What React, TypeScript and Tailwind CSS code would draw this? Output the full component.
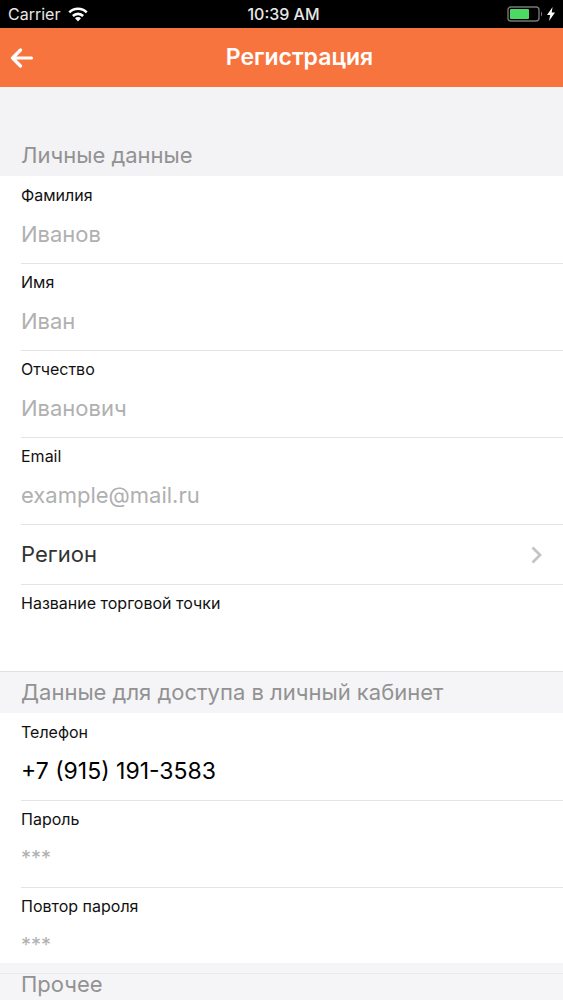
import { useId, type ReactNode } from 'react';

interface FieldProps {
  label: string;
  type?: string;
  placeholder?: string;
  defaultValue?: string;
  /** First row of a section, so no divider above it. */
  first?: boolean;
  size?: 'sm' | 'md' | 'lg';
}

const INPUT_SIZES = {
  sm: 'text-xl',
  md: 'text-[22px]',
  lg: 'text-[23px]',
};

function Field({ label, type = 'text', placeholder, defaultValue, first, size = 'md' }: FieldProps) {
  const id = useId();
  return (
    <div className={`ml-[21px] flex flex-col ${first ? 'pt-[7px]' : 'border-t border-[#e4e4e5] pt-1.5'}`}>
      <label htmlFor={id} className="text-base leading-6 text-[#111]">
        {label}
      </label>
      <input
        id={id}
        type={type}
        placeholder={placeholder}
        defaultValue={defaultValue}
        className={`mt-[9px] mb-[11px] h-9 w-full bg-transparent text-black outline-none placeholder:text-[#b0b0b0] ${INPUT_SIZES[size]}`}
      />
    </div>
  );
}

function SectionTitle({ children }: { children: ReactNode }) {
  return <h2 className="px-[21px] text-[22px] leading-[41px] text-[#929293]">{children}</h2>;
}

function StatusBar() {
  return (
    <div className="grid h-7 shrink-0 grid-cols-3 items-center bg-black px-2 text-base text-[#e8e8e8]">
      <div className="flex items-center gap-2">
        <span>Carrier</span>
        <svg viewBox="0 0 20 15" className="h-[15px] w-5" fill="none" stroke="#fff" strokeWidth="2.6">
          <path d="M1.3 5.4a12.3 12.3 0 0 1 17.4 0" />
          <path d="M4.9 9a7.2 7.2 0 0 1 10.2 0" />
          <path d="M10 14.4 7 11.3a4.2 4.2 0 0 1 6 0Z" fill="#fff" stroke="none" />
        </svg>
      </div>
      <span className="pl-1 text-center font-medium">10:39 AM</span>
      <div className="flex items-center justify-end gap-1">
        <svg viewBox="0 0 36 16" className="h-4 w-9" fill="none">
          <rect x="1" y="1" width="31" height="14" rx="3" stroke="#777" strokeWidth="1.4" />
          <rect x="3" y="3" width="19" height="10" rx="1" fill="#4cd964" />
          <path d="M34 5.5c1.6 1 1.6 4 0 5Z" fill="#777" />
        </svg>
        <svg viewBox="0 0 8 14" className="h-[14px] w-2" fill="#fff">
          <path d="M5.6 0 0 8h3.2L2 14l6-8.4H4.7Z" />
        </svg>
      </div>
    </div>
  );
}

export default function App() {
  return (
    <div className="flex h-screen flex-col overflow-hidden bg-white font-['Inter','Liberation_Sans',sans-serif]">
      <StatusBar />

      <header className="flex h-[59px] shrink-0 items-center gap-3 bg-[#f8743e] px-[10px] text-white">
        <button type="button" aria-label="Назад">
          <svg
            viewBox="0 0 24 20"
            className="h-5 w-6"
            fill="none"
            stroke="currentColor"
            strokeWidth="3.2"
            strokeLinecap="round"
            strokeLinejoin="round"
          >
            <path d="M21.5 10H2.5M10.5 2 2.5 10l8 8" />
          </svg>
        </button>
        <h1 className="flex-1 text-center text-[23px] font-semibold">Регистрация</h1>
      </header>

      <main className="min-h-0 flex-1 overflow-y-auto [scrollbar-width:none]">
        <form>
          <section>
            <div className="bg-[#f3f3f5] pt-12">
              <SectionTitle>Личные данные</SectionTitle>
            </div>
            <Field label="Фамилия" placeholder="Иванов" first />
            <Field label="Имя" placeholder="Иван" />
            <Field label="Отчество" placeholder="Иванович" />
            <Field label="Email" type="email" placeholder="example@mail.ru" />
            <div className="ml-[21px] border-t border-[#e4e4e5]">
              <button
                type="button"
                className="flex h-[59px] w-full items-center justify-between pr-5 text-[22px] text-[#333]"
              >
                Регион
                <svg viewBox="0 0 12 18" className="h-[18px] w-3" fill="none" stroke="#c4c4c6" strokeWidth="2.8">
                  <path d="m1.5 1.5 7.5 7.5-7.5 7.5" />
                </svg>
              </button>
            </div>
            <Field label="Название торговой точки" />
          </section>

          <section>
            <div className="border-t border-[#e2e2e4] bg-[#f5f5f7]">
              <SectionTitle>Данные для доступа в личный кабинет</SectionTitle>
            </div>
            <Field label="Телефон" type="tel" defaultValue="+7 (915) 191-3583" size="lg" first />
            <Field label="Пароль" type="password" placeholder="***" size="sm" />
            <Field label="Повтор пароля" type="password" placeholder="***" size="sm" />
          </section>

          {/* The grey band slides up under the last row */}
          <section className="-mt-[11px] bg-[#f5f5f7] pt-[10px]">
            <div className="border-t border-[#e9e9eb]">
              <h2 className="px-[21px] pb-2 text-[22px] leading-5 text-[#929293]">Прочее</h2>
            </div>
          </section>
        </form>
      </main>
    </div>
  );
}
